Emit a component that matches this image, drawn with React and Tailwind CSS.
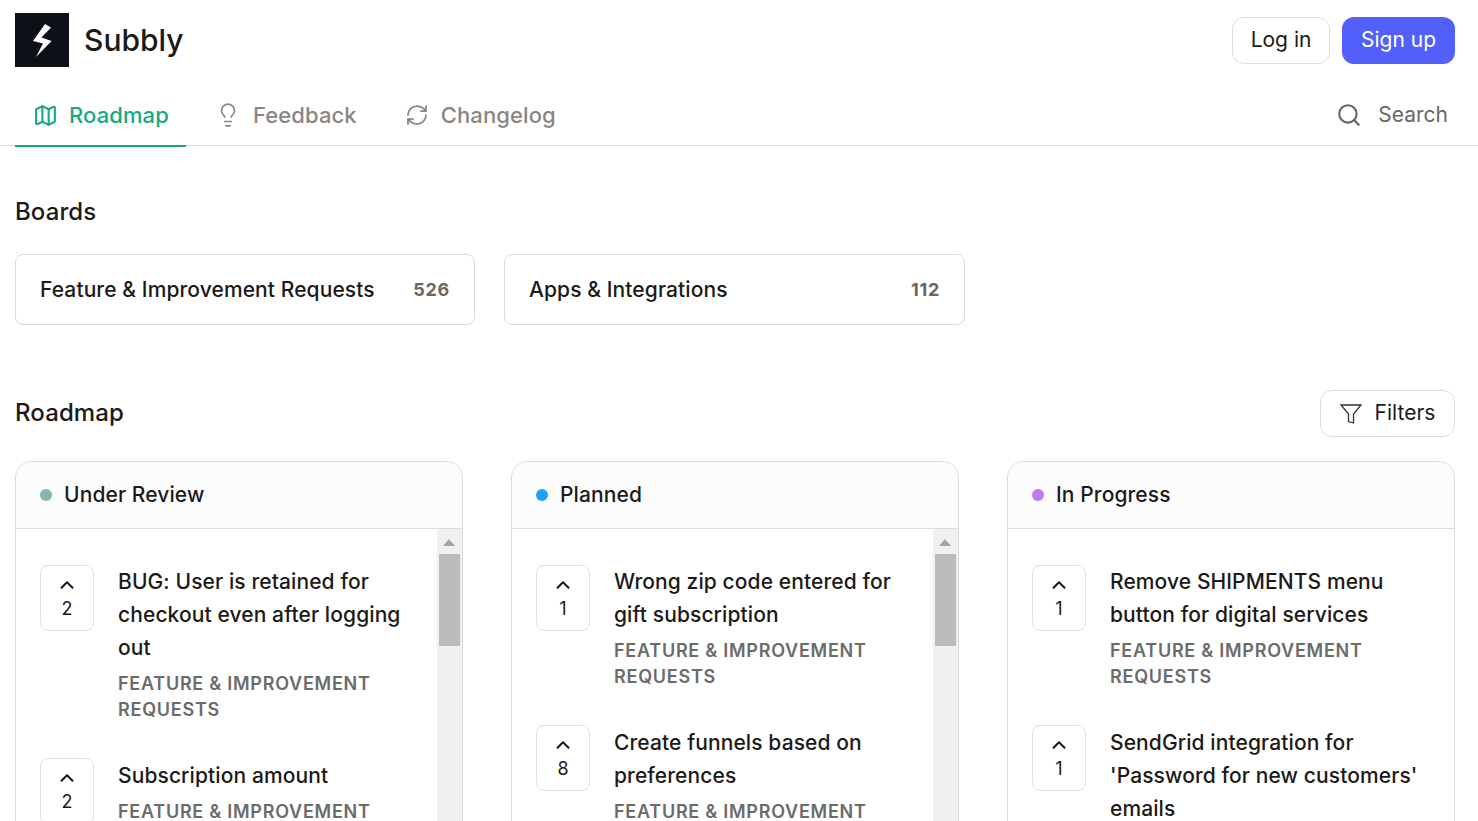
import { ChevronUp, Lightbulb, Map, RefreshCw, Search } from "lucide-react";

const columns = [
  {
    name: "Under Review",
    dot: "bg-[#85b5b5]",
    scroll: true,
    items: [
      { votes: 2, title: "BUG: User is retained for checkout even after logging out" },
      { votes: 2, title: "Subscription amount" },
    ],
  },
  {
    name: "Planned",
    dot: "bg-[#1fa0ff]",
    scroll: true,
    items: [
      { votes: 1, title: "Wrong zip code entered for gift subscription" },
      { votes: 8, title: "Create funnels based on preferences" },
    ],
  },
  {
    name: "In Progress",
    dot: "bg-[#bf7af0]",
    scroll: false,
    items: [
      { votes: 1, title: "Remove SHIPMENTS menu button for digital services" },
      { votes: 1, title: "SendGrid integration for 'Password for new customers' emails" },
    ],
  },
];

function BoardCard({ name, count, width }) {
  return (
    <div className={`flex h-[71px] items-center justify-between rounded-lg border border-[#d9d9d9] px-6 ${width}`}>
      <span className="text-[21px] font-medium tracking-[0.1px] text-[#1c1917]">{name}</span>
      <span className="text-lg font-bold tracking-[0.7px] text-[#6b665f]">{count}</span>
    </div>
  );
}

function Item({ votes, title }) {
  return (
    <div className="flex items-start gap-6">
      <div className="flex h-[66px] w-[54px] shrink-0 flex-col items-center rounded-lg border border-[#e0e0e0] pt-2 text-[#1c1917]">
        <ChevronUp size={22} strokeWidth={2.2} />
        <span className="text-lg leading-[26px]">{votes}</span>
      </div>
      <div className="-mb-[0.5px] min-w-0 flex-1 pt-[0.5px]">
        <h4 className="text-[21px] leading-[33px] font-medium tracking-[0.1px] text-[#1c1917]">{title}</h4>
        <p className="mt-[7px] text-lg leading-[26px] font-semibold tracking-[0.75px] text-[#6b6b6b] uppercase">
          Feature &amp; Improvement Requests
        </p>
      </div>
    </div>
  );
}

function Column({ name, dot, scroll, items }) {
  return (
    <div className="flex h-[500px] flex-col rounded-t-2xl border border-[#dcdcdc]">
      <div className="flex h-[67px] shrink-0 items-center gap-3 rounded-t-2xl border-b border-[#dcdcdc] bg-[#fcfcfc] px-6">
        <span className={`h-3 w-3 rounded-full ${dot}`}></span>
        <span className="text-[21px] font-medium tracking-[0.1px] text-[#1c1917]">{name}</span>
      </div>
      <div className="flex min-h-0 flex-1">
        <div className="flex min-w-0 flex-1 flex-col gap-[35.5px] pt-[35.6px] pr-5 pl-6">
          {items.map((item) => (
            <Item key={item.title} {...item} />
          ))}
        </div>
        {scroll && (
          <div className="w-[25px] shrink-0 bg-[#f0f0f0] px-0.5 pt-2.5">
            <div className="mx-auto h-0 w-0 -translate-x-px border-x-[6px] border-b-[7px] border-x-transparent border-b-[#a3a3a3]"></div>
            <div className="mt-2 h-[92px] bg-[#bcbcbc]"></div>
          </div>
        )}
      </div>
    </div>
  );
}

export default function App() {
  return (
    <div className="h-[821px] overflow-hidden bg-white font-['Inter',sans-serif] text-[#1c1917]">
      <header className="border-b border-[#d9d9d9] px-[15px] pt-[13px]">
        <div className="flex items-center justify-between pr-2">
          <div className="flex items-center gap-[15px]">
            <div className="h-[54px] w-[54px] bg-[#0d1117]">
              <svg width="54" height="54" viewBox="0 0 54 54" fill="#fff">
                <path d="M30 11 L36 14.5 L26.5 24.5 L36.5 28 L21 44 L28 30.5 L18 28 Z" />
              </svg>
            </div>
            <span className="text-[30px] font-medium">Subbly</span>
          </div>
          <div className="flex gap-3">
            <button className="h-[47px] w-[98px] rounded-xl border border-[#dcdcdc] text-[21px]">Log in</button>
            <button className="h-[47px] w-[113px] rounded-xl bg-[#525ffa] text-[21px] text-white">Sign up</button>
          </div>
        </div>
        <nav className="mt-[18px] flex items-center justify-between">
          <div className="flex h-[60px] items-start text-[22px] font-medium tracking-[0.1px] text-[#8a8583]">
            <a className="flex h-[62px] w-[171px] items-center gap-[11px] border-b-2 border-[#17a884] pl-[18px] text-[#17a884]">
              <Map size={25} />
              Roadmap
            </a>
            <a className="flex h-[62px] items-center gap-3 border-b-2 border-transparent pr-[48px] pl-[29px]">
              <Lightbulb size={26} strokeWidth={1.5} />
              Feedback
            </a>
            <a className="flex h-[62px] items-center gap-3 border-b-2 border-transparent">
              <RefreshCw size={24} strokeWidth={1.75} />
              Changelog
            </a>
          </div>
          <div className="flex items-center gap-4 pr-[15px] text-[21px] text-[#6b665f]">
            <Search size={26} strokeWidth={2} />
            Search
          </div>
        </nav>
      </header>

      <main className="px-[15px]">
        <h2 className="mt-[50px] text-2xl font-medium tracking-[0.1px]">Boards</h2>
        <div className="mt-[26px] flex gap-[29px]">
          <BoardCard name="Feature & Improvement Requests" count="526" width="w-[460px]" />
          <BoardCard name="Apps & Integrations" count="112" width="w-[461px]" />
        </div>
        <div className="mt-[65px] flex items-center justify-between pr-2">
          <h2 className="mb-0.5 text-2xl font-medium tracking-[0.1px]">Roadmap</h2>
          <button className="flex h-[47px] w-[135px] items-center justify-center gap-[13px] rounded-xl border border-[#dcdcdc] text-[21px]">
            <svg width="22" height="20" viewBox="0 0 22 20" fill="none" stroke="#333" strokeWidth="1.3">
              <path d="M1 1 H21 L13.5 10 V19 L8.5 17.5 V10 Z" />
            </svg>
            <span className="mb-0.5">Filters</span>
          </button>
        </div>
        <div className="mt-6 grid grid-cols-3 gap-12 pr-2">
          {columns.map((col) => (
            <Column key={col.name} {...col} />
          ))}
        </div>
      </main>
    </div>
  );
}
